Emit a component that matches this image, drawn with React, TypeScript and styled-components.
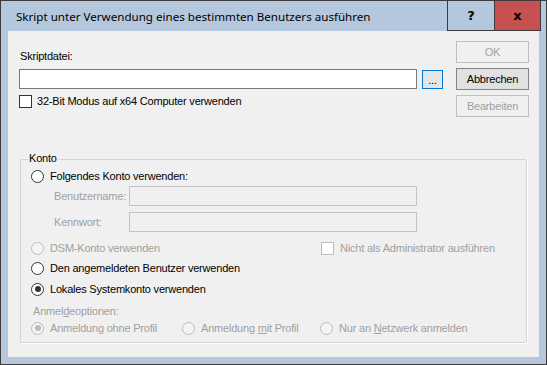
import React from 'react';
import styled, { createGlobalStyle } from 'styled-components';

const Global = createGlobalStyle`
  html, body { margin: 0; padding: 0; background: #ffffff; }
  body { font-family: "Liberation Sans", Arial, sans-serif; font-size: 11px; letter-spacing: -0.2px; }
  * { box-sizing: border-box; }
`;

const Window = styled.div`
  width: 547px;
  height: 365px;
  border: 1px solid #3c3c3c;
  background: #b5c7dc;
  display: flex;
  flex-direction: column;
`;

const TitleBar = styled.div`
  height: 30px;
  flex-shrink: 0;
  display: flex;
  align-items: stretch;
`;

const Title = styled.div`
  flex: 1;
  padding-left: 15px;
  display: flex;
  align-items: center;
  font-family: "Noto Sans", "Open Sans", sans-serif;
  font-size: 11.6px;
  letter-spacing: 0;
  color: #000;
`;

const Caption = styled.div`
  display: flex;
  margin-right: 5px;
  border-bottom: 1px solid #3c3c3c;
  border-right: 1px solid #3c3c3c;
`;

const CaptionButton = styled.div<{ $close?: boolean }>`
  width: ${p => (p.$close ? 46 : 47)}px;
  border-left: 1px solid #3c3c3c;
  background: ${p => (p.$close ? '#c75050' : 'transparent')};
  display: flex;
  align-items: center;
  justify-content: center;
  font-family: "DejaVu Sans", sans-serif;
  font-weight: 700;
  font-size: 13px;
  letter-spacing: 0;
  color: #000;
`;

const Client = styled.div`
  flex: 1;
  margin: 0 7px 7px;
  background: #f0f0f0;
  padding: 10px 10px 0 11px;
  display: flex;
  flex-direction: column;
  color: #000;
`;

const TopRow = styled.div`
  display: flex;
  justify-content: space-between;
  align-items: flex-start;
`;

const LeftCol = styled.div`
  display: flex;
  flex-direction: column;
`;

const Label = styled.div<{ $disabled?: boolean; $mt?: number; $ml?: number; $w?: number }>`
  line-height: 13px;
  height: 13px;
  white-space: nowrap;
  color: ${p => (p.$disabled ? '#a0a0a0' : '#000')};
  margin-top: ${p => p.$mt ?? 0}px;
  margin-left: ${p => p.$ml ?? 0}px;
  ${p => (p.$w ? `width: ${p.$w}px; flex-shrink: 0;` : '')}
`;

const FileRow = styled.div`
  display: flex;
  align-items: flex-start;
  gap: 5px;
  margin-top: 6px;
`;

const TextBox = styled.div<{ $w: number; $disabled?: boolean }>`
  width: ${p => p.$w}px;
  height: 20px;
  border: 1px solid ${p => (p.$disabled ? '#c3c3c3' : '#7a7a7a')};
  background: ${p => (p.$disabled ? '#f0f0f0' : '#ffffff')};
  flex-shrink: 0;
`;

const Browse = styled.div`
  width: 21px;
  height: 19px;
  margin-top: 1px;
  border: 1px solid #0078d7;
  background: #e5e5e5;
  display: flex;
  align-items: flex-end;
  justify-content: center;
  padding-bottom: 3px;
  line-height: 10px;
  font-size: 11px;
`;

const CheckRow = styled.div<{ $mt?: number; $gap?: number; $disabled?: boolean }>`
  display: flex;
  align-items: center;
  gap: ${p => p.$gap ?? 5}px;
  margin-top: ${p => p.$mt ?? 0}px;
  white-space: nowrap;
  color: ${p => (p.$disabled ? '#a0a0a0' : '#000')};
  line-height: 13px;
`;

const CheckBox = styled.span<{ $disabled?: boolean }>`
  width: 13px;
  height: 13px;
  border: 1px solid ${p => (p.$disabled ? '#bcbcbc' : '#333333')};
  background: #ffffff;
  flex-shrink: 0;
`;

const ButtonCol = styled.div`
  display: flex;
  flex-direction: column;
  gap: 5px;
  width: 73px;
`;

const Button = styled.div<{ $disabled?: boolean }>`
  height: 22px;
  border: 1px solid ${p => (p.$disabled ? '#bfbfbf' : '#858585')};
  background: ${p => (p.$disabled ? '#f0f0f0' : '#e1e1e1')};
  color: ${p => (p.$disabled ? '#a0a0a0' : '#000')};
  display: flex;
  align-items: center;
  justify-content: center;
`;

const GroupBox = styled.div`
  margin: 42px 0 0 1px;
  width: 507px;
  height: 184px;
  border: 1px solid #d5d5d5;
  border-radius: 2px;
  box-shadow: 1px 1px 0 #ffffff;
  display: flex;
  flex-direction: column;
  padding-left: 10px;
`;

const GroupTitle = styled.div`
  align-self: flex-start;
  margin: -8px 0 0 -3px;
  padding: 0 1px;
  background: #f0f0f0;
  line-height: 13px;
  height: 13px;
`;

const OptionRow = styled.div<{ $mt?: number }>`
  display: flex;
  align-items: center;
  height: 20px;
  margin-top: ${p => p.$mt ?? 0}px;
`;

const Option = styled.div<{ $disabled?: boolean; $w?: number }>`
  display: flex;
  align-items: center;
  gap: 6px;
  white-space: nowrap;
  color: ${p => (p.$disabled ? '#a0a0a0' : '#000')};
  ${p => (p.$w ? `width: ${p.$w}px; flex-shrink: 0;` : '')}
`;

const Radio = styled.span<{ $disabled?: boolean; $checked?: boolean }>`
  width: 13px;
  height: 13px;
  border-radius: 50%;
  border: 1px solid ${p => (p.$disabled ? '#bcbcbc' : '#333333')};
  background: ${p => (p.$disabled ? '#f4f4f4' : '#ffffff')};
  display: flex;
  align-items: center;
  justify-content: center;
  flex-shrink: 0;
  &::after {
    content: '';
    display: ${p => (p.$checked ? 'block' : 'none')};
    width: 6px;
    height: 6px;
    border-radius: 50%;
    background: ${p => (p.$disabled ? '#bcbcbc' : '#333333')};
  }
`;

const FieldRow = styled.div<{ $mt?: number }>`
  display: flex;
  align-items: center;
  height: 20px;
  margin-top: ${p => p.$mt ?? 0}px;
  padding-left: 23px;
`;

export default function App() {
  return (
    <>
      <Global />
      <Window>
        <TitleBar>
          <Title>Skript unter Verwendung eines bestimmten Benutzers ausführen</Title>
          <Caption>
            <CaptionButton>?</CaptionButton>
            <CaptionButton $close>x</CaptionButton>
          </Caption>
        </TitleBar>
        <Client>
          <TopRow>
            <LeftCol>
              <Label $mt={9} $ml={1}>Skriptdatei:</Label>
              <FileRow>
                <TextBox $w={398} />
                <Browse>...</Browse>
              </FileRow>
              <CheckRow $mt={6}>
                <CheckBox />
                <span>32-Bit Modus auf x64 Computer verwenden</span>
              </CheckRow>
            </LeftCol>
            <ButtonCol>
              <Button $disabled>OK</Button>
              <Button>Abbrechen</Button>
              <Button $disabled>Bearbeiten</Button>
            </ButtonCol>
          </TopRow>
          <GroupBox>
            <GroupTitle>Konto</GroupTitle>
            <OptionRow $mt={1}>
              <Option>
                <Radio />
                <span>Folgendes Konto verwenden:</span>
              </Option>
            </OptionRow>
            <FieldRow>
              <Label $disabled $w={75}>Benutzername:</Label>
              <TextBox $w={288} $disabled />
            </FieldRow>
            <FieldRow $mt={6}>
              <Label $disabled $w={75}>Kennwort:</Label>
              <TextBox $w={288} $disabled />
            </FieldRow>
            <OptionRow $mt={6}>
              <Option $disabled $w={290}>
                <Radio $disabled />
                <span>DSM-Konto verwenden</span>
              </Option>
              <CheckRow $disabled $gap={6}>
                <CheckBox $disabled />
                <span>Nicht als Administrator ausführen</span>
              </CheckRow>
            </OptionRow>
            <OptionRow>
              <Option>
                <Radio />
                <span>Den angemeldeten Benutzer verwenden</span>
              </Option>
            </OptionRow>
            <OptionRow $mt={1}>
              <Option>
                <Radio $checked />
                <span>Lokales Systemkonto verwenden</span>
              </Option>
            </OptionRow>
            <Label $disabled $mt={6} $ml={2}>
              Anmel<u>d</u>eoptionen:
            </Label>
            <OptionRow>
              <Option $disabled $w={151}>
                <Radio $disabled $checked />
                <span>Anmeldung ohne Profil</span>
              </Option>
              <Option $disabled $w={138}>
                <Radio $disabled />
                <span>
                  Anmeldung <u>m</u>it Profil
                </span>
              </Option>
              <Option $disabled>
                <Radio $disabled />
                <span>
                  Nur an <u>N</u>etzwerk anmelden
                </span>
              </Option>
            </OptionRow>
          </GroupBox>
        </Client>
      </Window>
    </>
  );
}
